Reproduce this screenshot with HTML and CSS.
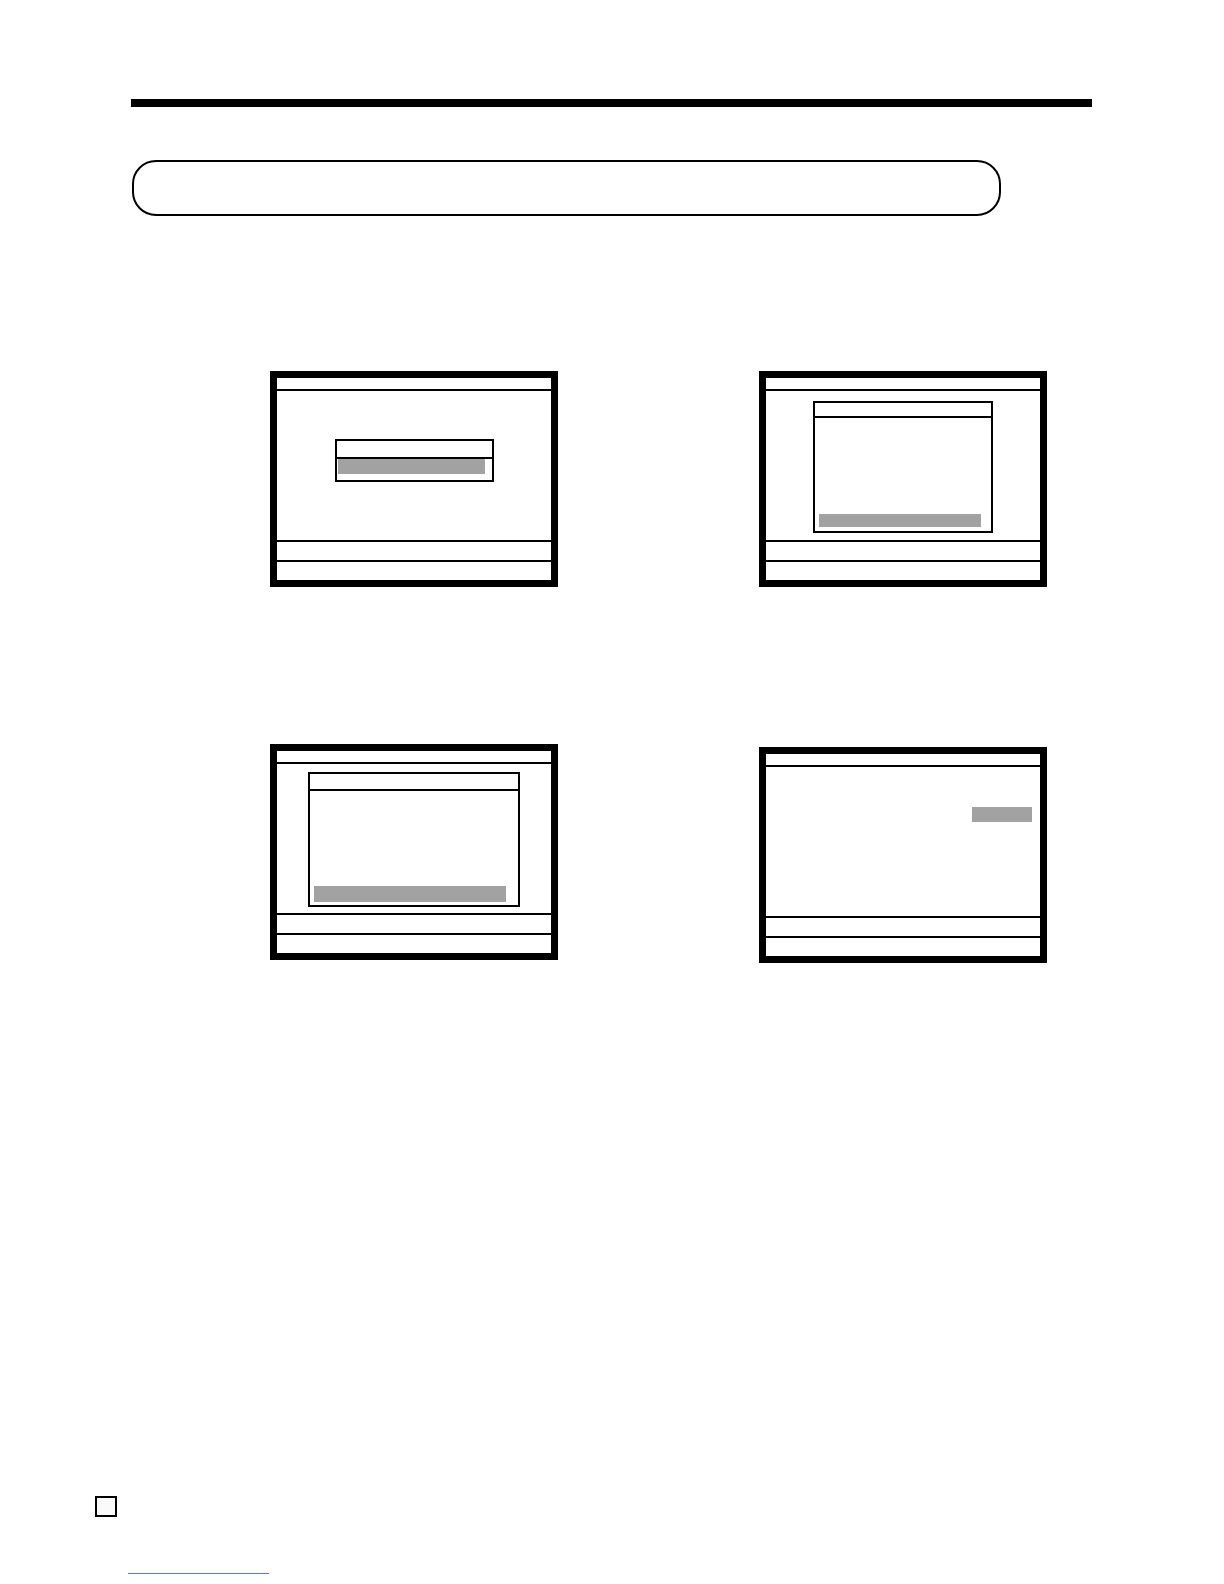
FILE: index.html
```html
<!DOCTYPE html>
<html lang="en">
<head>
<meta charset="utf-8">
<title>Screens</title>
<link rel="stylesheet" href="styles.css">
</head>
<body>
<div class="page">
  <div class="rule"></div>
  <div class="title-pill"></div>

  <div class="screens">
    <div class="screen">
      <div class="scr-head"></div>
      <div class="scr-body">
        <div class="dialog d1">
          <div class="dlg-head h1"></div>
          <div class="dlg-body b1"><div class="sel sel1"></div></div>
        </div>
      </div>
      <div class="scr-foot"></div>
      <div class="scr-foot"></div>
    </div>

    <div class="screen">
      <div class="scr-head"></div>
      <div class="scr-body">
        <div class="dialog d2">
          <div class="dlg-head h2"></div>
          <div class="dlg-body b2"><div class="sel sel2"></div></div>
        </div>
      </div>
      <div class="scr-foot"></div>
      <div class="scr-foot"></div>
    </div>

    <div class="screen">
      <div class="scr-head"></div>
      <div class="scr-body">
        <div class="dialog d3">
          <div class="dlg-head h3"></div>
          <div class="dlg-body b3"><div class="sel sel3"></div></div>
        </div>
      </div>
      <div class="scr-foot"></div>
      <div class="scr-foot"></div>
    </div>

    <div class="screen s4">
      <div class="scr-head"></div>
      <div class="scr-body b4">
        <div class="sel sel4"></div>
      </div>
      <div class="scr-foot"></div>
      <div class="scr-foot"></div>
    </div>
  </div>

  <div class="page-mark"></div>
  <div class="link-line"></div>
</div>
</body>
</html>
```

FILE: styles.css
```css
html, body {
  margin: 0;
  padding: 0;
  background: #ffffff;
  font-family: "Liberation Sans", Arial, sans-serif;
}

.page {
  width: 1224px;
  height: 1584px;
  padding-top: 99px;
  box-sizing: border-box;
  overflow: hidden;
}

.rule {
  margin-left: 131px;
  width: 961px;
  height: 8px;
  background: #000;
}

.title-pill {
  margin: 53px 0 0 132px;
  width: 869px;
  height: 56px;
  box-sizing: border-box;
  border: 2px solid #000;
  border-radius: 24px;
}

.screens {
  margin: 155px 0 0 270px;
  display: grid;
  grid-template-columns: 288px 288px;
  column-gap: 201px;
  row-gap: 157px;
  align-items: start;
}

.screen {
  width: 288px;
  height: 216px;
  box-sizing: border-box;
  border: 7px solid #000;
  display: flex;
  flex-direction: column;
  background: #fff;
}

.s4 {
  margin-top: 3px;
}

.scr-head {
  height: 11px;
  border-bottom: 2px solid #000;
  flex: none;
}

.scr-body {
  flex: 1;
  display: flex;
  flex-direction: column;
  min-height: 0;
}

.scr-foot {
  flex: none;
  height: 20px;
  box-sizing: border-box;
  border-top: 2px solid #000;
}

.dialog {
  box-sizing: border-box;
  border: 2px solid #000;
  display: flex;
  flex-direction: column;
  align-self: center;
  background: #fff;
}

.dlg-head {
  flex: none;
  border-bottom: 2px solid #000;
}

.dlg-body {
  flex: 1;
  display: flex;
  flex-direction: column;
}

.sel {
  background: #a2a2a2;
  flex: none;
}

/* screen 1: small centred dialog */
.d1 { margin-top: 48px; width: 159px; height: 43px; }
.h1 { height: 16px; }
.sel1 { margin-left: 1px; width: 147px; height: 15px; }

/* screen 2: list dialog */
.d2 { margin-top: 10px; width: 180px; height: 132px; }
.h2 { height: 13px; }
.b2 { justify-content: flex-end; padding: 0 0 4px 4px; }
.sel2 { width: 162px; height: 13px; }

/* screen 3: wider list dialog */
.d3 { margin-top: 8px; width: 212px; height: 135px; }
.h3 { height: 15px; }
.b3 { justify-content: flex-end; padding: 0 0 3px 4px; }
.sel3 { width: 192px; height: 16px; }

/* screen 4: value field */
.b4 { align-items: flex-end; }
.sel4 { margin: 40px 8px 0 0; width: 60px; height: 15px; }

.page-mark {
  margin: 533px 0 0 95px;
  width: 22px;
  height: 21px;
  box-sizing: border-box;
  border: 2px solid #000;
  background: #fafafa;
}

.link-line {
  margin: 56px 0 0 128px;
  width: 141px;
  height: 1px;
  background: #5b78d2;
}
```
